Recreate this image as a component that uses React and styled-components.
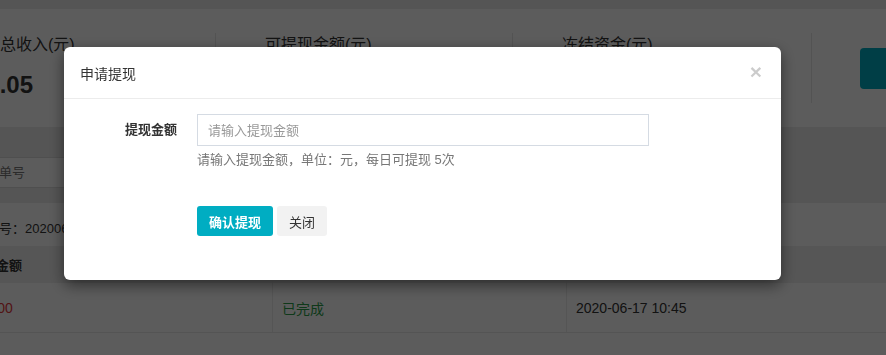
import React from "react";
import styled, { createGlobalStyle } from "styled-components";

const GlobalStyle = createGlobalStyle`
  html, body {
    margin: 0;
    padding: 0;
    background: #ebebeb;
    overflow: hidden;
  }
  body {
    font-family: "Liberation Sans", "Noto Sans CJK SC", sans-serif;
    color: #333;
  }
  * {
    box-sizing: border-box;
  }
`;

// the page behind the dialog is scrolled a little to the right
const Page = styled.div`
  width: calc(100% + 81px);
  margin-left: -81px;
  padding-top: 9px;
  min-height: 355px;
`;

const StatsCard = styled.div`
  height: 118px;
  background: #fff;
  display: flex;
  align-items: center;
`;

const Stat = styled.div`
  width: ${(p) => p.w}px;
  height: 70px;
  padding-left: 49px;
  border-right: 1px solid #e6e6e6;
  flex-shrink: 0;
`;

const StatLabel = styled.div`
  font-size: 16px;
  line-height: 24px;
  color: #333;
`;

const StatValue = styled.div`
  margin-top: 12px;
  font-size: 24px;
  line-height: 32px;
  font-weight: bold;
  color: #333;
  margin-left: 5px;
`;

const StatAction = styled.div`
  flex: 1;
  padding-left: 48px;
  display: flex;
  align-items: center;
`;

const TealButton = styled.div`
  width: 110px;
  height: 41px;
  border-radius: 4px;
  background: #00acc1;
`;

const FilterBar = styled.div`
  padding: 30px 0 15px 56px;
`;

const SearchInput = styled.div`
  width: 260px;
  height: 31px;
  background: #fff;
  border: 1px solid #dcdcdc;
  padding-left: 10px;
  font-size: 13px;
  line-height: 29px;
  color: #777;
`;

const Panel = styled.div`
  background: #fff;
  min-height: 160px;
`;

const InfoLine = styled.div`
  height: 43px;
  padding-left: 54px;
  font-size: 13px;
  line-height: 52px;
  color: #333;
`;

const TableRow = styled.div`
  margin-left: 41px;
  display: grid;
  grid-template-columns: 312px 294px 1fr;
  height: ${(p) => (p.head ? 37 : 50)}px;
  background: ${(p) => (p.head ? "#eeeeee" : "#fff")};
  border-bottom: ${(p) => (p.head ? "none" : "1px solid #e8e8e8")};
`;

const Cell = styled.div`
  padding: 0 9px;
  display: flex;
  align-items: center;
  font-size: ${(p) => (p.head ? 13 : 14)}px;
  font-weight: ${(p) => (p.head ? "bold" : "normal")};
  color: ${(p) => p.color || "#333"};
  border-left: 1px solid ${(p) => (p.first ? "transparent" : "#ebebeb")};
`;

const Overlay = styled.div`
  position: fixed;
  inset: 0;
  background: rgba(0, 0, 0, 0.64);
`;

const Modal = styled.div`
  position: absolute;
  left: 64px;
  top: 47px;
  width: 717px;
  background: #fff;
  border-radius: 6px;
  box-shadow: 0 5px 15px rgba(0, 0, 0, 0.5);
`;

const ModalHeader = styled.div`
  height: 52px;
  padding: 0 15px 0 16px;
  border-bottom: 1px solid #ececec;
  display: flex;
  align-items: center;
  justify-content: space-between;
`;

const ModalTitle = styled.div`
  font-size: 14px;
  color: #333;
  font-family: "Noto Sans CJK SC", sans-serif;
`;

const Close = styled.span`
  font-family: "Liberation Sans", sans-serif;
  font-size: 21px;
  font-weight: bold;
  line-height: 1;
  color: #000;
  opacity: 0.2;
  margin-right: 4px;
  margin-top: -2px;
`;

const ModalBody = styled.div`
  padding: 15px 15px 44px;
`;

const FormRow = styled.div`
  display: flex;
  align-items: flex-start;
`;

const Label = styled.label`
  width: 98px;
  margin-right: 20px;
  text-align: right;
  font-size: 13px;
  line-height: 32px;
  font-weight: bold;
  color: #333;
`;

const Field = styled.div`
  width: 452px;
`;

const Input = styled.input`
  display: block;
  width: 100%;
  height: 32px;
  border: 1px solid #d5dbe3;
  border-radius: 0;
  padding: 0 10px;
  font-size: 13px;
  font-family: "Liberation Sans", "Noto Sans CJK SC", sans-serif;
  color: #333;
  outline: none;
  &::placeholder {
    color: #999;
  }
`;

const Help = styled.div`
  margin-top: 4px;
  font-size: 13px;
  line-height: 20px;
  color: #777;
`;

const Actions = styled.div`
  margin: 36px 0 0 118px;
  display: flex;
  gap: 4px;
`;

const Button = styled.button`
  height: 30px;
  padding: 0 12px;
  border: none;
  border-radius: 3px;
  font-size: 13px;
  font-family: "Liberation Sans", "Noto Sans CJK SC", sans-serif;
  font-weight: ${(p) => (p.primary ? "bold" : "normal")};
  background: ${(p) => (p.primary ? "#00adc2" : "#f2f2f2")};
  color: ${(p) => (p.primary ? "#fff" : "#333")};
  cursor: pointer;
`;

const App = () => {
  return (
    <>
      <GlobalStyle />
      <Page>
        <StatsCard>
          <Stat w={297}>
            <StatLabel>累计总收入(元)</StatLabel>
            <StatValue>18.05</StatValue>
          </Stat>
          <Stat w={297}>
            <StatLabel>可提现金额(元)</StatLabel>
            <StatValue>18.05</StatValue>
          </Stat>
          <Stat w={299}>
            <StatLabel>冻结资金(元)</StatLabel>
            <StatValue>0.00</StatValue>
          </Stat>
          <StatAction>
            <TealButton />
          </StatAction>
        </StatsCard>
        <FilterBar>
          <SearchInput>订单号</SearchInput>
        </FilterBar>
        <Panel>
          <InfoLine>订单号：20200617104512</InfoLine>
          <TableRow head>
            <Cell head first>提现金额</Cell>
            <Cell head>状态</Cell>
            <Cell head>申请时间</Cell>
          </TableRow>
          <TableRow>
            <Cell first color="#e4393c">100.00</Cell>
            <Cell color="#2a9d48">已完成</Cell>
            <Cell>2020-06-17 10:45</Cell>
          </TableRow>
        </Panel>
      </Page>
      <Overlay>
        <Modal>
          <ModalHeader>
            <ModalTitle>申请提现</ModalTitle>
            <Close>×</Close>
          </ModalHeader>
          <ModalBody>
            <FormRow>
              <Label>提现金额</Label>
              <Field>
                <Input placeholder="请输入提现金额" />
                <Help>请输入提现金额，单位：元，每日可提现 5次</Help>
              </Field>
            </FormRow>
            <Actions>
              <Button primary>确认提现</Button>
              <Button>关闭</Button>
            </Actions>
          </ModalBody>
        </Modal>
      </Overlay>
    </>
  );
};

export default App;
